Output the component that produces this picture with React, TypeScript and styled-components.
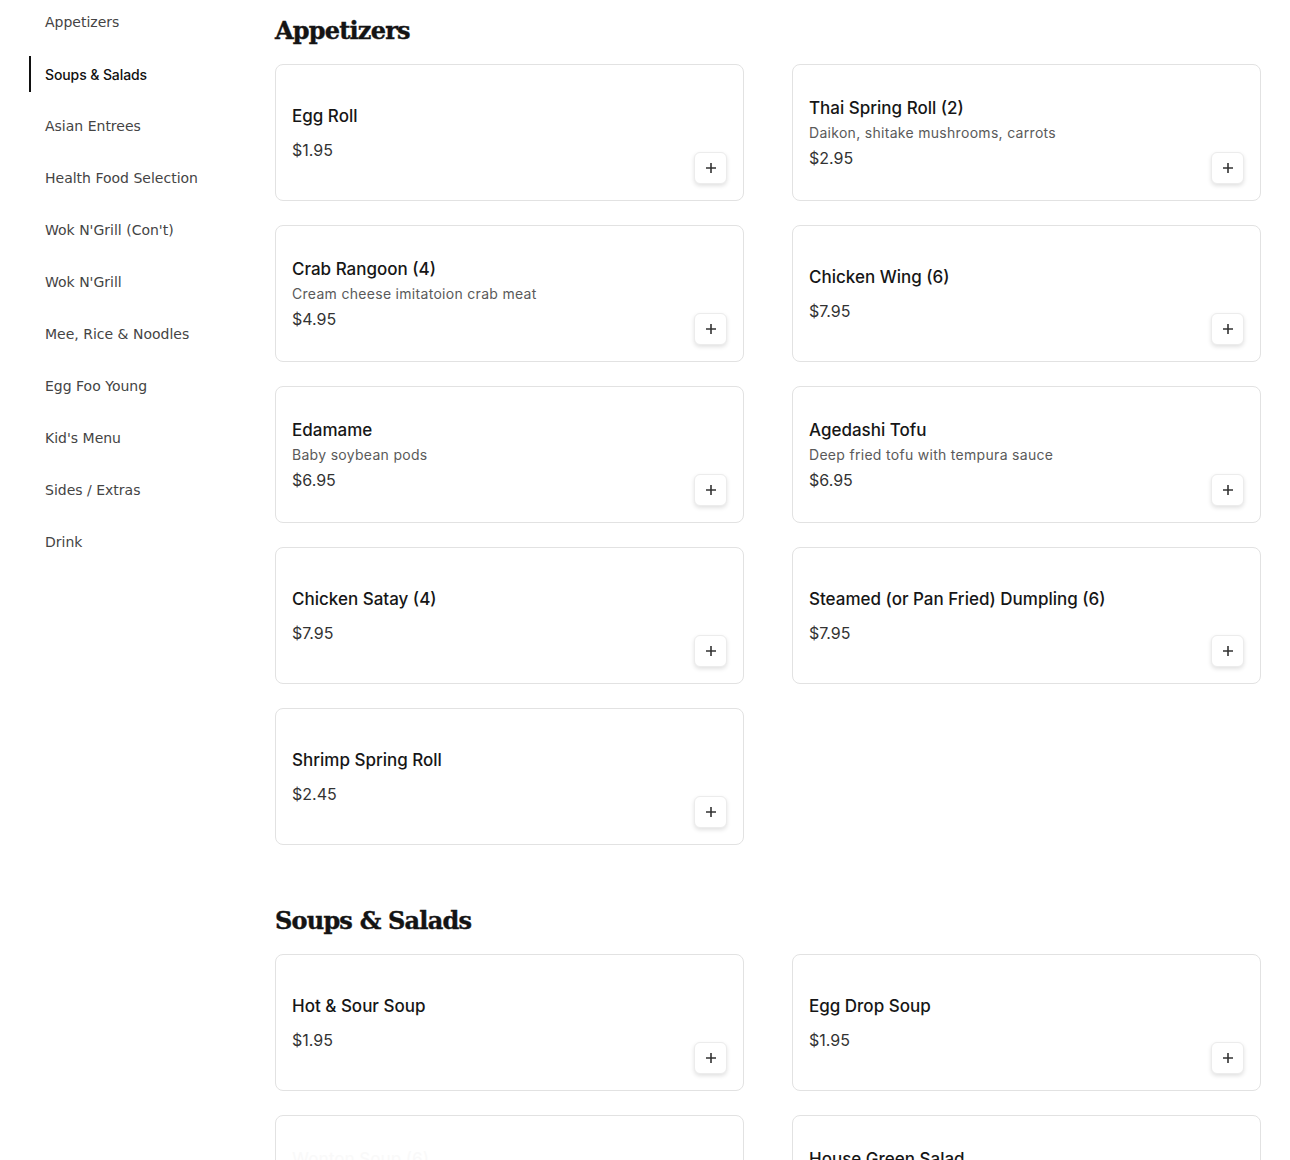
import React from "react";
import styled, { createGlobalStyle } from "styled-components";

type Item = { name: string; desc?: string; price: string; faded?: boolean };
type Section = { title: string; items: Item[] };

const categories = [
    "Appetizers",
    "Soups & Salads",
    "Asian Entrees",
    "Health Food Selection",
    "Wok N'Grill (Con't)",
    "Wok N'Grill",
    "Mee, Rice & Noodles",
    "Egg Foo Young",
    "Kid's Menu",
    "Sides / Extras",
    "Drink",
];

const sections: Section[] = [
    {
        title: "Appetizers",
        items: [
            { name: "Egg Roll", price: "$1.95" },
            { name: "Thai Spring Roll (2)", desc: "Daikon, shitake mushrooms, carrots", price: "$2.95" },
            { name: "Crab Rangoon (4)", desc: "Cream cheese imitatoion crab meat", price: "$4.95" },
            { name: "Chicken Wing (6)", price: "$7.95" },
            { name: "Edamame", desc: "Baby soybean pods", price: "$6.95" },
            { name: "Agedashi Tofu", desc: "Deep fried tofu with tempura sauce", price: "$6.95" },
            { name: "Chicken Satay (4)", price: "$7.95" },
            { name: "Steamed (or Pan Fried) Dumpling (6)", price: "$7.95" },
            { name: "Shrimp Spring Roll", price: "$2.45" },
        ],
    },
    {
        title: "Soups & Salads",
        items: [
            { name: "Hot & Sour Soup", price: "$1.95" },
            { name: "Egg Drop Soup", price: "$1.95" },
            { name: "Wonton Soup (6)", desc: "Pork wontons in chicken broth", price: "$2.95", faded: true },
            { name: "House Green Salad", desc: "Mixed greens, ginger dressing", price: "$3.95" },
        ],
    },
];

const App = () => {
    const active = "Soups & Salads";
    return (
        <>
            <GlobalStyle />
            <Page>
                <Sidebar>
                    {categories.map(c => (
                        <NavItem key={c} $active={c === active}>{c}</NavItem>
                    ))}
                </Sidebar>
                <Main>
                    {sections.map(s => (
                        <MenuSection key={s.title}>
                            <SectionTitle>{s.title}</SectionTitle>
                            <Grid>
                                {s.items.map(item => (
                                    <Card key={item.name}>
                                        <Content $faded={item.faded}>
                                            <ItemName>{item.name}</ItemName>
                                            {item.desc && <ItemDesc>{item.desc}</ItemDesc>}
                                            <Price>{item.price}</Price>
                                        </Content>
                                        <AddButton aria-label="Add">
                                            <svg width="12" height="12" viewBox="0 0 12 12">
                                                <path d="M6 1v10M1 6h10" stroke="#333" strokeWidth="1.6" />
                                            </svg>
                                        </AddButton>
                                    </Card>
                                ))}
                            </Grid>
                        </MenuSection>
                    ))}
                </Main>
            </Page>
        </>
    );
};

const GlobalStyle = createGlobalStyle`
    html, body {
        margin: 0;
        padding: 0;
        background: #fff;
    }
    * {
        box-sizing: border-box;
    }
`;

const Page = styled.div`
    display: grid;
    grid-template-columns: 275px 1fr;
    padding-right: 29px;
`;

const Sidebar = styled.nav`
    display: flex;
    flex-direction: column;
    gap: 16px;
    padding: 4px 0 0 29px;
`;

const NavItem = styled.div<{ $active?: boolean }>`
    height: 36px;
    display: flex;
    align-items: center;
    padding-left: 14px;
    border-left: 2px solid ${p => (p.$active ? "#111" : "transparent")};
    font-family: ${p => (p.$active ? "Inter, 'Noto Sans', sans-serif" : "'DejaVu Sans', sans-serif")};
    font-size: 14px;
    font-weight: ${p => (p.$active ? 500 : 400)};
    color: ${p => (p.$active ? "#111" : "#444")};
    letter-spacing: ${p => (p.$active ? "-0.1px" : "0")};
`;

const Main = styled.main`
    padding-top: 12px;
    display: flex;
    flex-direction: column;
    gap: 57px;
`;

const MenuSection = styled.section`
    display: flex;
    flex-direction: column;
    gap: 16px;
`;

const SectionTitle = styled.h2`
    margin: 0;
    height: 36px;
    line-height: 38px;
    font-family: "DejaVu Serif", serif;
    font-weight: 900;
    font-size: 24px;
    letter-spacing: -0.8px;
    color: #141414;
    -webkit-text-stroke: 0.4px #141414;
`;

const Grid = styled.div`
    display: grid;
    grid-template-columns: 1fr 1fr;
    column-gap: 48px;
    row-gap: 24px;
`;

const Card = styled.div`
    height: 137px;
    border: 1px solid #e2e2e2;
    border-radius: 8px;
    padding: 16px;
    display: grid;
    grid-template-columns: 1fr auto;
    background: #fff;
`;

const Content = styled.div<{ $faded?: boolean }>`
    align-self: center;
    display: flex;
    flex-direction: column;
    font-family: Inter, "Noto Sans", sans-serif;
    opacity: ${p => (p.$faded ? 0.02 : 1)};
`;

const ItemName = styled.div`
    font-size: 17px;
    line-height: 24px;
    font-weight: 500;
    color: #161616;
    letter-spacing: 0;
`;

const ItemDesc = styled.div`
    margin-top: 2px;
    font-size: 14px;
    line-height: 22px;
    color: #5a5a5a;
    letter-spacing: 0.3px;
`;

const Price = styled.div`
    margin-top: 10px;
    font-size: 16px;
    line-height: 24px;
    color: #333;
    ${ItemDesc} + & {
        margin-top: 2px;
    }
`;

const AddButton = styled.button`
    align-self: end;
    width: 33px;
    height: 32px;
    padding: 0;
    display: flex;
    align-items: center;
    justify-content: center;
    background: #fff;
    border: 1px solid #ececec;
    border-radius: 6px;
    box-shadow: 0 2px 4px rgba(0, 0, 0, 0.12);
    cursor: pointer;
`;

export default App;
